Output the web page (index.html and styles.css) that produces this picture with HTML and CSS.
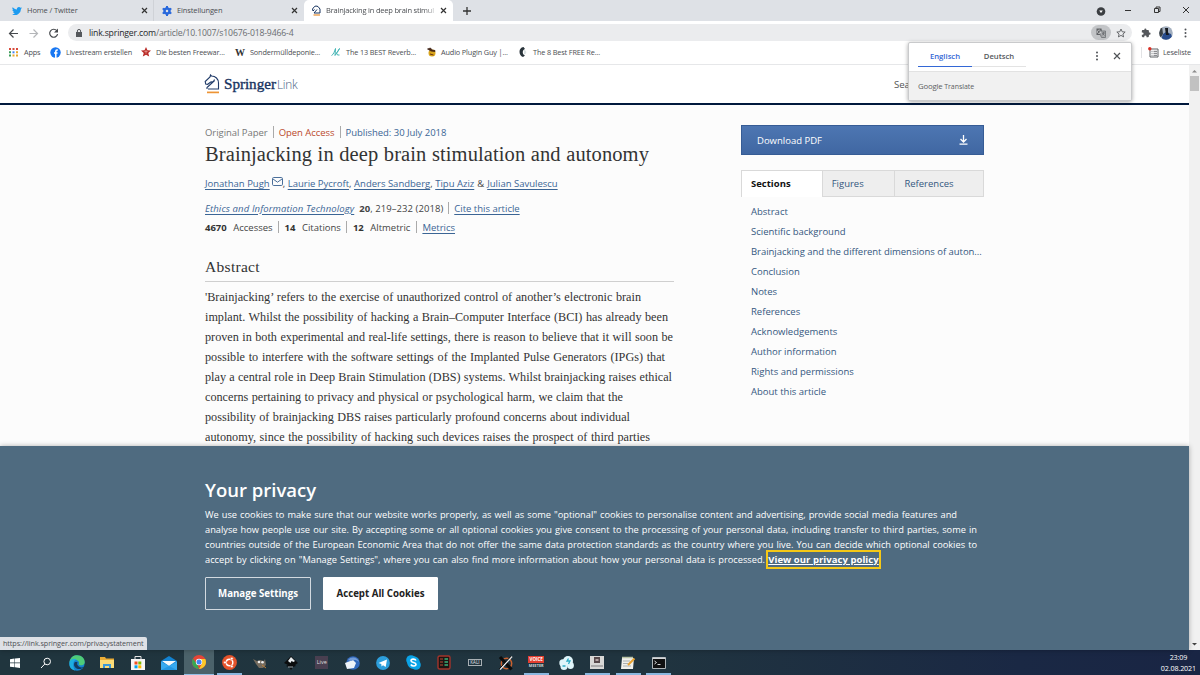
FILE: index.html
```html
<!DOCTYPE html>
<html lang="de">
<head>
<meta charset="utf-8">
<title>Brainjacking in deep brain stimulation and autonomy</title>
<link rel="stylesheet" href="styles.css">
</head>
<body>
<div class="screen">
  <header class="tabs">
    <div class="tab tab-a">
      <svg class="ic" width="10" height="10" viewBox="0 0 24 24"><path fill="#1d9bf0" d="M24 4.6c-.9.4-1.800.7-2.800.8 1-.6 1.800-1.600 2.200-2.700-1 .6-2 1-3.100 1.200a4.900 4.900 0 0 0-8.400 4.500C7.700 8.200 4.100 6.300 1.700 3.200a4.900 4.900 0 0 0 1.500 6.500c-.8 0-1.600-.2-2.200-.6v.1c0 2.400 1.700 4.400 3.900 4.800-.7.200-1.500.2-2.200.1.600 2 2.400 3.400 4.600 3.400A9.900 9.900 0 0 1 0 19.500a14 14 0 0 0 21.500-12.400c1-.7 1.800-1.500 2.500-2.500z"/></svg>
      <span class="w50">Home / Twitter</span>
      <svg class="x" width="7" height="7" viewBox="0 0 7 7"><path d="M1 1l5 5M6 1l-5 5" stroke="#333" stroke-width="1.2"/></svg>
    </div>
    <div class="tab tab-b">
      <svg class="ic" width="10" height="10" viewBox="0 0 20 20"><circle cx="10" cy="10" r="5" fill="none" stroke="#2868dc" stroke-width="5"/><path d="M10 0v4M10 16v4M1.300 5l3.500 2M15.200 13l3.500 2M1.300 15l3.500-2M15.200 7l3.500-2" stroke="#2868dc" stroke-width="4"/></svg>
      <span class="w45">Einstellungen</span>
      <svg class="x" width="7" height="7" viewBox="0 0 7 7"><path d="M1 1l5 5M6 1l-5 5" stroke="#333" stroke-width="1.200"/></svg>
    </div>
    <div class="tab tab-c">
      <svg class="ic" width="9" height="11" viewBox="0 0 18 22"><path d="M1 8L5 3l3-1 4 1 4 5v8H4l6-7M5 9l-3 3-1-4" fill="none" stroke="#16335f" stroke-width="2"/><path d="M3 20h13" stroke="#e89438" stroke-width="2.500"/></svg>
      <span class="fade">Brainjacking in deep brain stimul</span>
      <svg class="x" width="7" height="7" viewBox="0 0 7 7"><path d="M1 1l5 5M6 1l-5 5" stroke="#333" stroke-width="1.200"/></svg>
    </div>
    <svg class="plus" width="8" height="8" viewBox="0 0 8 8"><path d="M4 0v8M0 4h8" stroke="#333" stroke-width="1.300"/></svg>
    <svg class="winctl" width="100" height="20" viewBox="0 0 100 20"><circle cx="5" cy="10.500" r="4.300" fill="#3b3e42"/><path d="M3.200 9.500h3.600L5 12z" fill="#fff"/><path d="M29 9.500h6M87 6l6 6M93 6l-6 6" stroke="#333" fill="none"/><path d="M58.500 7.500h4v4h-4zM60 7V6h4v4.500h-1.500" fill="none" stroke="#333"/></svg>
  </header>

  <div class="toolbar">
    <svg class="nav" width="66" height="22" viewBox="0 0 66 22"><g fill="none" stroke="#46494d" stroke-width="1.200"><path d="M18 11.500h-8M13.500 7.500l-4 4 4 4"/><path stroke="#b4b6b9" d="M29.500 11.500h8M33.500 7.500l4 4-4 4"/><path d="M56.800 8.700a4 4 0 1 0 .8 3.500"/></g><path d="M58 6.500v4h-4z" fill="#46494d"/></svg>
    <div class="omnibox">
      <svg width="6" height="8" viewBox="0 0 6 8"><path d="M0 3h6v5H0z" fill="#55585c"/><path d="M1.400 3V2a1.600 1.600 0 0 1 3.200 0v1" fill="none" stroke="#55585c"/></svg>
      <span class="url"><b>link.springer.com</b>/article/10.1007/s10676-018-9466-4</span>
      <span class="trans"><svg width="10" height="10" viewBox="0 0 10 10"><path d="M.5.500h5l1 6.500h-6z" fill="#5e6165"/><path d="M4 3h5.500v6.500H5.500L4.500 7" fill="#a9abae" stroke="#6b6e72" stroke-width=".8"/><path d="M4.500 3a1.700 1.700 0 1 0 .2 1.200H3" stroke="#eee" stroke-width=".6" fill="none"/><path d="M6 5h3M7.500 4.200V5c0 1-.8 2-1.300 2.400M6.500 5.500l2 2" stroke="#55585c" stroke-width=".6" fill="none"/></svg></span>
      <svg class="star" width="10" height="10" viewBox="0 0 24 24"><path d="M12 2.500l2.900 6.600 7.100.6-5.400 4.700 1.600 7-6.200-3.700-6.200 3.700 1.600-7L2 9.700l7.100-.6z" fill="none" stroke="#505357" stroke-width="2"/></svg>
    </div>
    <svg class="ext" width="10" height="10" viewBox="0 0 24 24"><path fill="#55585c" d="M20.500 11H19V7a2 2 0 0 0-2-2h-4V3.500a2.500 2.500 0 0 0-5 0V5H4a2 2 0 0 0-2 2v3.800h1.500a2.700 2.700 0 0 1 0 5.400H2V20c0 1.100.9 2 2 2h3.800v-1.500a2.700 2.700 0 0 1 5.400 0V22H17a2 2 0 0 0 2-2v-4h1.500a2.500 2.500 0 0 0 0-5z"/></svg>
    <svg class="avatar" width="14" height="14" viewBox="0 0 14 14"><defs><clipPath id="av"><circle cx="7" cy="7" r="6.800"/></clipPath></defs><g clip-path="url(#av)"><path fill="#a3afbf" d="M0 0h14v14H0z"/><path fill="#3a4045" d="M0 0h3l1 8-4 6z"/><path fill="#274b8b" d="M2 14l2-6 3-2 5 2 2 6z"/><path fill="#15191f" d="M6 2h3v4l1 3H7z"/></g></svg>
    <svg class="dots" width="3" height="10" viewBox="0 0 3 10"><g fill="#505357"><circle cx="1.500" cy="1.400" r="1"/><circle cx="1.500" cy="5" r="1"/><circle cx="1.500" cy="8.600" r="1"/></g></svg>
  </div>

  <nav class="bookmarks">
    <a class="bm b1"><svg width="10" height="10" viewBox="0 0 10 10"><g fill="#d84a3b"><path d="M0 1h2v2H0zM3.500 1h2v2h-2zM7 1h2v2H7z"/><path fill="#3b9d58" d="M0 4.300h2v2H0z"/><path fill="#4285f4" d="M3.500 4.300h2v2h-2z"/><path fill="#e8a72b" d="M7 4.300h2v2H7zM3.500 7.600h2v2h-2zM7 7.600h2v2H7z"/><path fill="#3b9d58" d="M0 7.600h2v2H0z"/></g></svg><span>Apps</span></a>
    <a class="bm b2"><svg width="11" height="11" viewBox="0 0 11 11"><circle cx="5.500" cy="5.500" r="5.200" fill="#1877f2"/><path d="M7.800 3H7c-1 0-1.200.5-1.200 1.200V11M4 6h3.500" fill="none" stroke="#fff" stroke-width="1.500"/></svg><span>Livestream erstellen</span></a>
    <a class="bm b3"><svg width="10" height="10" viewBox="0 0 24 24"><path d="M12 0l3.500 8 8.500.6-6.500 5.700 2.200 8.700L12 18.500 4.300 23l2.200-8.700L0 8.600 8.500 8z" fill="#b92b27"/><path d="M12 7v9M8 11h8" stroke="#efb0a8" stroke-width="1.500"/></svg><span>Die besten Freewar...</span></a>
    <a class="bm b4"><i class="wiki">W</i><span>Sondermülldeponie...</span></a>
    <a class="bm b5"><svg width="10" height="10" viewBox="0 0 20 20"><path d="M1 17c4-1 7-11 8-14l-1 14L17 3c-2 5-5 8-6 9l2 4 4 0" fill="none" stroke="#43b5b5" stroke-width="2"/></svg><span>The 13 BEST Reverb...</span></a>
    <a class="bm b6"><svg width="9" height="10" viewBox="0 0 18 20"><ellipse cx="10" cy="12" rx="7" ry="7" fill="#d9a51c"/><path d="M1 4l6-2 3 4 6 1v2L8 8z" fill="#4b2614" stroke="#3b2015" stroke-width="1.500"/><path d="M6 14l7 2" stroke="#6b3515" stroke-width="2"/></svg><span>Audio Plugin Guy |...</span></a>
    <a class="bm b7"><svg width="9" height="10" viewBox="0 0 18 20"><path d="M9 0C-2 1-1 18 8 20l4-3C6 15 6 6 12 4z" fill="#29333a"/><path d="M10 6c6 0 6 9 0 9" fill="#dce3e4"/></svg><span>The 8 Best FREE Re...</span></a>
    <a class="reading"><svg width="11" height="11" viewBox="0 0 11 11"><path d="M2 2h8v8H2z" fill="none" stroke="#5d6064"/><path d="M3.500 4.300h1M5.500 4.300h3.500M3.500 6.300h1M5.500 6.300h3.500M3.500 8.300h1M5.500 8.300h3.500" stroke="#5d6064" stroke-width=".9"/><circle cx="1.800" cy="1.800" r="1.700" fill="#d93025"/></svg><span>Leseliste</span></a>
  </nav>

  <div class="view">
    <div class="page">
      <div class="site-head">
        <svg width="17" height="20" viewBox="0 0 17 20"><g fill="none" stroke="#1f3a68" stroke-width="1.100"><path d="M4 15h10.500V9c0-4-3-7-7-7L6.500 1 6 3 1.200 7.500l.5 2.500 2 .3 3-2.300 2.800-.5L3 13.500V15M9.500 7.500l1-2"/></g><path d="M3 18.400h12" stroke="#ed9435" stroke-width="1.700"/></svg>
        <span class="brand">Springer</span><span class="brand2">Link</span>
        <span class="search">Sea</span>
      </div>
      <div class="cols">
        <main>
          <div class="meta"><span class="gray m1">Original Paper</span><i></i><span class="red m2">Open Access</span><i></i><span class="blue m3">Published: 30 July 2018</span></div>
          <h1>Brainjacking in deep brain stimulation and autonomy</h1>
          <div class="authors"><a class="a1">Jonathan Pugh</a><svg width="11" height="9" viewBox="0 0 11 9"><rect x=".5" y=".5" width="10" height="8" rx="1.200" fill="none" stroke="#4b6f9a"/><path d="M1 2l4.500 3.200L10 2" fill="none" stroke="#4b6f9a"/></svg><span class="comma">,</span><a class="a2">Laurie Pycroft</a><span class="comma">,</span><a class="a3">Anders Sandberg</a><span class="comma">,</span><a class="a4">Tipu Aziz</a><span class="amp">&amp;</span><a class="a5">Julian Savulescu</a></div>
          <div class="journal"><a class="j1">Ethics and Information Technology</a><span class="j2"><b>20</b>, 219–232 (2018)</span><i></i><a class="j3">Cite this article</a></div>
          <div class="stats"><b>4670</b><span class="s1">Accesses</span><i></i><b>14</b><span class="s2">Citations</span><i></i><b>12</b><span class="s3">Altmetric</span><i></i><a>Metrics</a></div>
          <h2>Abstract</h2>
          <div class="abstract">
            <div class="l1">'Brainjacking’ refers to the exercise of unauthorized control of another’s electronic brain</div>
            <div class="l2">implant. Whilst the possibility of hacking a Brain–Computer Interface (BCI) has already been</div>
            <div class="l3">proven in both experimental and real-life settings, there is reason to believe that it will soon be</div>
            <div class="l4">possible to interfere with the software settings of the Implanted Pulse Generators (IPGs) that</div>
            <div class="l5">play a central role in Deep Brain Stimulation (DBS) systems. Whilst brainjacking raises ethical</div>
            <div class="l6">concerns pertaining to privacy and physical or psychological harm, we claim that the</div>
            <div class="l7">possibility of brainjacking DBS raises particularly profound concerns about individual</div>
            <div class="l8">autonomy, since the possibility of hacking such devices raises the prospect of third parties</div>
          </div>
        </main>
        <aside>
          <div class="pdf"><span>Download PDF</span><svg width="9" height="10" viewBox="0 0 9 10"><path d="M4.500 0v6.500M1.500 4l3 3 3-3M.5 9.200h8" fill="none" stroke="#fff" stroke-width="1.300"/></svg></div>
          <div class="stabs"><b>Sections</b><span>Figures</span><span>References</span></div>
          <ul>
            <li>Abstract</li><li>Scientific background</li><li class="long">Brainjacking and the different dimensions of auton...</li><li>Conclusion</li><li>Notes</li><li>References</li><li>Acknowledgements</li><li>Author information</li><li>Rights and permissions</li><li>About this article</li>
          </ul>
        </aside>
      </div>
      <section class="privacy">
        <h3>Your privacy</h3>
        <div class="p1">We use cookies to make sure that our website works properly, as well as some "optional" cookies to personalise content and advertising, provide social media features and</div>
        <div class="p2">analyse how people use our site. By accepting some or all optional cookies you give consent to the processing of your personal data, including transfer to third parties, some in</div>
        <div class="p3">countries outside of the European Economic Area that do not offer the same data protection standards as the country where you live. You can decide which optional cookies to</div>
        <div class="p4"><span>accept by clicking on "Manage Settings", where you can also find more information about how your personal data is processed.</span><a>View our privacy policy</a></div>
        <div class="btns"><button class="manage">Manage Settings</button><button class="accept">Accept All Cookies</button></div>
      </section>
    </div>
    <div class="scroll"><svg width="11" height="11" viewBox="0 0 11 11"><path d="M3 7.500h5L5.500 5z" fill="#8a8a8a"/></svg><div class="thumb"></div><svg class="down" width="11" height="11" viewBox="0 0 11 11"><path d="M3 4h5L5.500 6.500z" fill="#444"/></svg></div>
    <div class="popup">
      <div class="ptop"><b class="en">Englisch</b><b class="de">Deutsch</b><svg width="32" height="12" viewBox="0 0 32 12"><g fill="#505357"><circle cx="5" cy="2.500" r="1"/><circle cx="5" cy="6" r="1"/><circle cx="5" cy="9.500" r="1"/></g><path d="M22 3l6 6M28 3l-6 6" stroke="#505357" stroke-width="1.200"/></svg></div>
      <div class="pbot"><span>Google</span> Translate</div>
    </div>
    <div class="status">https://link.springer.com/privacystatement</div>
  </div>

  <footer class="taskbar">
    <div><svg width="12" height="12" viewBox="0 0 12 12"><path fill="#fff" d="M1 2.200l4.500-.6v4H1zM6 1.500L11 1v4.600H6zM1 6.200h4.500v4L1 9.700zM6 6.200h5V11l-5-.7z"/></svg></div>
    <div><svg width="12" height="12" viewBox="0 0 12 12"><circle cx="7.200" cy="4.500" r="3.300" fill="none" stroke="#fff"/><path d="M4.800 7L1 11" stroke="#fff"/></svg></div>
    <div><svg width="16" height="16" viewBox="0 0 16 16"><circle cx="8" cy="8" r="7.700" fill="#1483cf"/><path d="M.4 8C1 2 5 .3 8 .3c5 0 8 3.500 7.700 7.200-.3 3-5 3.500-6 2C11 7 9 5 6 5S1 6 .4 8z" fill="#4fcb78"/><path d="M6 7c-2 2-1 6 3 7 3 .5 5-1 5.500-2-2 1-5 0-6-2-.6-1-.3-2 0-3z" fill="#143d60"/><path d="M.4 8C1 4 5 3 8 4.500 4 5 3 10 6 15.500 2 14.500 0 12 .4 8z" fill="#1daee0"/></svg></div>
    <div><svg width="14" height="13" viewBox="0 0 14 13"><path d="M0 1h5l1 1.500h8V12H0z" fill="#e9ac36"/><path d="M0 4h14v8H0z" fill="#fbdc78"/><path d="M3 8h8v4H9V10H5v2H3z" fill="#3b99d9"/></svg></div>
    <div><svg width="14" height="16" viewBox="0 0 14 16"><path d="M4 5V1.500h6V5" fill="none" stroke="#e5e5e5"/><path d="M0 4h14v11H0z" fill="#f6f6f6"/><path d="M3.500 6.500h3v3h-3z" fill="#f25022"/><path d="M7.300 6.500h3v3h-3z" fill="#7fba00"/><path d="M3.500 10.300h3v3h-3z" fill="#00a4ef"/><path d="M7.300 10.300h3v3h-3z" fill="#ffb900"/></svg></div>
    <div><svg width="16" height="14" viewBox="0 0 16 14"><path d="M0 5l8-5 8 5v9H0z" fill="#1282d1"/><path d="M1 5h14l-7 5z" fill="#f5f9fc"/><path d="M0 5.500l8 4.500 8-4.500V14H0z" fill="#38aaf0"/><path d="M0 14l8-4 8 4z" fill="#2497e3"/></svg></div>
    <div class="active"><svg width="14" height="14" viewBox="0 0 14 14"><circle cx="7" cy="7" r="7" fill="#e54537"/><path d="M1 3.500L5.500 10 7 14A7 7 0 0 1 1 3.500z" fill="#36a852"/><path d="M7 4h6.300A7 7 0 0 1 7 14l3-5.500z" fill="#fbc928"/><circle cx="7" cy="7" r="3.200" fill="#fff"/><circle cx="7" cy="7" r="2.500" fill="#4285f4"/></svg></div>
    <div class="open"><svg width="15" height="15" viewBox="0 0 15 15"><circle cx="7.500" cy="7.500" r="7.400" fill="#e4532b"/><circle cx="7.500" cy="7.500" r="3.300" fill="none" stroke="#fff" stroke-width="1.400"/><g fill="#fff" stroke="#e4532b" stroke-width=".6"><circle cx="3" cy="7.500" r="1.400"/><circle cx="9.800" cy="3.600" r="1.400"/><circle cx="9.800" cy="11.400" r="1.400"/></g></svg></div>
    <div><svg width="14" height="12" viewBox="0 0 14 12"><path d="M0 2l4 2 3-1 4 1 1-2 1 6-3 3H6L3 7z" fill="#756b5d"/><circle cx="6" cy="5" r="1.300" fill="#eee"/><circle cx="9.500" cy="5.200" r="1.300" fill="#eee"/><path d="M9 8l4 3" stroke="#c08138"/></svg></div>
    <div><svg width="14" height="14" viewBox="0 0 14 14"><path d="M7 0l7 7-3 2 1 1-3 1-2 3-2-3-3-1 2-1-4-2z" fill="#0b0d0e"/><path d="M7 1l4 4-1.500 1-2-1-1 2-2.500-2z" fill="#e9eef0"/><path d="M4 11h5" stroke="#9aa5aa"/></svg></div>
    <div><span class="live">Live</span></div>
    <div><svg width="15" height="14" viewBox="0 0 15 14"><circle cx="8" cy="7" r="6.800" fill="#3168bb"/><path d="M0 7l8-3 3 3-2 5-7 1z" fill="#eef3f8"/><path d="M3 4c3-4 10-3 11 2-3-3-6-2-8-1z" fill="#729cd8"/></svg></div>
    <div><svg width="14" height="14" viewBox="0 0 14 14"><circle cx="7" cy="7" r="6.900" fill="#2c9edb"/><path d="M2.500 7L11 3.500 9.700 11 7 9.200 5.500 10.500 5.300 8z" fill="#fff"/></svg></div>
    <div><svg width="15" height="15" viewBox="0 0 15 15"><circle cx="5" cy="5" r="4.800" fill="#0aa3e6"/><circle cx="10" cy="10" r="4.800" fill="#0aa3e6"/><circle cx="7.500" cy="7.500" r="6.300" fill="#0aa3e6"/><path d="M10 5.500C9 3.500 5 3.700 5 5.800 5 8 10 7 10 9.300c0 2.200-4 2.200-5.200.2" fill="none" stroke="#fff" stroke-width="1.600"/></svg></div>
    <div><svg width="14" height="15" viewBox="0 0 14 15"><rect x="1" y="1" width="12" height="13" rx="1.500" fill="#1d1412" stroke="#a3342b" stroke-width="1.400"/><path d="M3 4h3M3 7h3M3 10h3" stroke="#ba4a34"/><path d="M7.500 4h3.500M7.500 7h3.500M7.500 10h3.500" stroke="#3bb17a" stroke-width="1.300"/></svg></div>
    <div><span class="kali">KALI</span></div>
    <div><svg width="16" height="16" viewBox="0 0 16 16"><circle cx="8.500" cy="8.500" r="5.200" fill="none" stroke="#c8602e" stroke-width="1.500"/><path d="M2 2l11.500 12.500" stroke="#0c0c0c" stroke-width="3.200"/><path d="M14 1.500L2 14.500" stroke="#e9e9e9" stroke-width="1.500"/><path d="M13 1.200L1.200 14" stroke="#111" stroke-width="1"/></svg></div>
    <div class="open"><span class="voice"><b>VOICE</b><b>MEETER</b></span></div>
    <div><svg width="15" height="14" viewBox="0 0 15 14"><g fill="#e0f5fa"><circle cx="9" cy="5" r="5"/><circle cx="4" cy="7" r="3.700"/><circle cx="5" cy="10.500" r="3.500"/><circle cx="11.500" cy="9.500" r="3.400"/></g><path d="M9.500 2.500L8 5h3L9.500 8M3.500 10h3" fill="none" stroke="#2baac4" stroke-width="1.300"/></svg></div>
    <div class="open"><svg width="14" height="14" viewBox="0 0 14 14"><path d="M0 0h14v13H0z" fill="#d8d8d6"/><path d="M4 1h6v6H4z" fill="#57494b"/><path d="M5.500 3h3v2h-3z" fill="#b5a5a5"/><path d="M1 9h12v2H1z" fill="#aaa"/></svg></div>
    <div class="open"><svg width="15" height="14" viewBox="0 0 15 14"><path d="M1 2h12l-1 11H0z" fill="#f1f0eb"/><path d="M1 1.500h11" stroke="#b9c3a4" stroke-width="1.500"/><path d="M2 5h7M2 7.500h5M2 10h8" stroke="#9aa1a5" stroke-width=".8"/><path d="M13.500 2.500L7 9" stroke="#e7a02f" stroke-width="2"/></svg></div>
    <div class="open"><svg width="14" height="12" viewBox="0 0 14 12"><path d="M.5.500h13v11H.5z" fill="#111" stroke="#aeb4b7"/><path d="M.5 1.300h13" stroke="#d5d7d9" stroke-width="1.400"/><path d="M2.500 4l2 1.500-2 1.500M5.500 7.500h3" fill="none" stroke="#eee" stroke-width=".9"/></svg></div>
    <div class="clock"><span>23:09</span><span>02.08.2021</span></div>
  </footer>
</div>
</body>
</html>
```
FILE: styles.css
```css
* { box-sizing: border-box; }
body { margin: 0; font-family: "Open Sans", "Noto Sans", sans-serif; }
svg { display: block; flex: none; }
.screen { width: 1200px; height: 675px; display: flex; flex-direction: column; overflow: hidden; background: #fff; white-space: nowrap; }

/* tab strip */
.tabs { height: 21px; flex: none; background: #dee1e6; display: flex; align-items: center; font-size: 7.500px; letter-spacing: -.12px; color: #4b4e52; padding-bottom: 0; }
.tab { height: 21px; display: flex; align-items: center; padding-right: 7px; }
.tab > span { padding-bottom: 1px; }
.tab .ic { margin-right: 5px; }
.tab .x { margin-left: auto; }
.tab-a { width: 154px; padding-left: 12px; padding-right: 5px; border-right: 1px solid #cfd2d7; }
.tab-b { width: 150px; padding-left: 8px; padding-right: 6px; }
.tab-c { width: 149px; padding-left: 8px; background: #fff; border-radius: 5px 5px 0 0; padding-right: 6px; }
.fade { width: 109px; overflow: hidden; letter-spacing: -.2px; -webkit-mask-image: linear-gradient(90deg, #000 90%, rgba(0,0,0,.25)); mask-image: linear-gradient(90deg, #000 90%, rgba(0,0,0,.25)); }
.plus { margin-left: 10px; }
.winctl { margin-left: auto; margin-right: 4px; }

/* toolbar */
.toolbar { height: 23px; flex: none; display: flex; align-items: center; }
.nav { margin-right: 2px; }
.omnibox { width: 1064px; height: 17px; border-radius: 9px; background: #ebecee; display: flex; align-items: center; padding-left: 8px; font-size: 8.700px; color: #6a6d71; }
.url { margin-left: 7px; letter-spacing: -.18px; }
.url b { font-weight: 400; color: #25282b; }
.trans { margin-left: auto; width: 20px; height: 15px; border-radius: 8px; background: #c2c4c7; display: grid; place-items: center; }
.star { margin: 0 6px 0 5px; }
.ext { margin-left: 9px; }
.avatar { margin-left: 8px; }
.dots { margin-left: 11px; }

/* bookmarks */
.bookmarks { height: 21px; flex: none; border-bottom: 1px solid #e6e7e9; display: flex; align-items: center; padding: 0 9px 4px 9px; font-size: 7.300px; color: #4b4e52; }
.bm, .reading { display: flex; align-items: center; gap: 5px; letter-spacing: -.14px; }
.b1 { width: 41px; } .b2 { width: 91px; } .b3 { width: 94px; } .b4 { width: 96px; } .b5 { width: 96px; } .b6 { width: 92px; }
.b6, .b7 { gap: 5px; }
.b4 { gap: 4px; }
.wiki { font: 700 10px "Liberation Serif", serif; color: #333; width: 11px; letter-spacing: 0; }
.reading { margin-left: auto; border-left: 1px solid #e2e3e5; padding-left: 6px; gap: 4px; height: 11px; }

/* viewport */
.view { position: relative; height: 585px; flex: none; display: flex; }
.page { width: 1189px; background: #fcfcfc; display: flex; flex-direction: column; }
.site-head { height: 40px; flex: none; border-bottom: 2px solid #01193d; background: #fff; display: flex; align-items: center; padding-left: 204px; }
.brand { width: 52px; font: 15.200px "Liberation Serif", serif; color: #17325f; margin-left: 3px; -webkit-text-stroke: .35px #17325f; letter-spacing: -.05px; }
.brand2 { width: 22px; font-size: 11.800px; font-weight: 300; color: #4a5f82; margin-left: 1px; letter-spacing: -.2px; }
.search { margin-left: 595px; width: 14px; overflow: hidden; font-size: 9.600px; letter-spacing: -.1px; color: #555; }

.cols { flex: 1; display: flex; padding-left: 205px; min-height: 0; }
main { width: 469px; padding-top: 19px; font-size: 9.500px; color: #444; }
main a, .blue { color: #3b6595; }
main a { text-decoration: underline; text-underline-offset: 1.500px; text-decoration-thickness: 1px; }
main i { width: 1px; height: 12px; background: #aaa; margin: 0 5px; }
.meta, .authors, .journal, .stats { display: flex; align-items: center; height: 16px; }
.meta { letter-spacing: -.04px; }
.gray { color: #777; } .red { color: #bb4a2c; }
h1 { margin: 0; font: 20.500px/28px "Liberation Serif", serif; color: #333; width: 444px; letter-spacing: .1px; text-align-last: justify; }
.authors { margin-top: 8px; height: 15px; }
.authors svg { margin: -4px 0 0 2px; }
.comma { width: 5px; }
.amp { margin: 0 3px; }
.journal { margin-top: 9px; height: 16px; }
.j1 { font-style: italic; margin-right: 5px; letter-spacing: .12px; }
.j2 { letter-spacing: .06px; }
.stats { margin-top: 3px; }
.stats i { margin: 0 5.500px; }
.stats b { margin-right: 6.500px; color: #333; }
h2 { margin: 20px 0 0; height: 27px; border-bottom: 1px solid #cfcfcf; font: 15.500px/24px "Liberation Serif", serif; color: #333; letter-spacing: .3px; }
.abstract { font: 12.200px/20px "Liberation Serif", serif; color: #333; padding-top: 5px; }
.abstract div, .p1, .p2, .p3, .p4 span { text-align-last: justify; }
.l1 { width: 436px; } .l2 { width: 463px; } .l3 { width: 468px; } .l4 { width: 460px; }
.l5 { width: 467px; } .l6 { width: 418px; } .l7 { width: 425px; } .l8 { width: 445px; }

aside { margin-left: 67px; width: 243px; padding-top: 20px; color: #35587f; font-size: 9.500px; }
.pdf { height: 30px; border: 1px solid #365c95; background: linear-gradient(#4d76b2, #4067a2); color: #fff; display: flex; align-items: center; justify-content: space-between; padding: 0 15px; }
.stabs { margin-top: 15px; height: 27px; display: flex; border: 1px solid #d9d9d9; border-bottom: 0; }
.stabs b, .stabs span { display: flex; align-items: center; padding: 0 0 1px 9px; }
.stabs b { width: 80px; background: #fff; color: #111; }
.stabs span { width: 73px; background: #eee; border-left: 1px solid #d9d9d9; border-bottom: 1px solid #d9d9d9; }
.stabs span:last-child { width: 89px; }
ul { list-style: none; margin: 5px 0 0; padding: 0 0 0 10px; line-height: 20px; }
.long { letter-spacing: -.03px; }

/* cookie banner */
.privacy { height: 204px; flex: none; background: #4f6b80; color: #fff; padding: 30px 0 0 205px; box-shadow: 0 0 5px rgba(0,0,0,.3); font-size: 9.250px; line-height: 15px; position: relative; }
h3 { margin: 0; font-size: 18.500px; line-height: 28px; height: 31px; font-weight: 600; }
.p1 { width: 752px; } .p2, .p3 { width: 772px; }
.p4 { display: flex; }
.p4 span { width: 560px; }
.p4 a { margin: -2px 0 -2px 1px; width: 115px; height: 19px; border: 2px solid #f5c816; line-height: 15px; font-size: 9.500px; letter-spacing: .05px; font-weight: 700; text-decoration: underline; text-align: center; }
.btns { display: flex; gap: 12px; margin-top: 10px; }
button { height: 33px; font: 700 9.700px "Open Sans", sans-serif; border: 1px solid #d3dae0; border-radius: 1px; padding: 0; white-space: nowrap; }
.manage { width: 106px; background: none; color: #fff; }
.accept { width: 115px; background: #fff; color: #222; border-color: #fff; }

.scroll { width: 11px; background: #f1f1f1; display: flex; flex-direction: column; }
.thumb { width: 9px; height: 15px; background: #c1c1c1; margin-left: 1px; }
.down { margin-top: auto; }

/* overlays */
.popup { position: absolute; left: 908px; top: -23px; width: 224px; height: 59px; background: #fff; border: 1px solid #c9cacc; border-radius: 2px; box-shadow: 0 1px 4px rgba(0,0,0,.35); font-size: 7.700px; overflow: hidden; }
.ptop { height: 29px; display: flex; align-items: center; padding-left: 9px; border-bottom: 1px solid #e2e2e2; }
.ptop b { height: 17px; width: 54px; text-align: center; line-height: 12px; font-weight: 600; color: #55585c; border-bottom: 1px solid #e3e3e3; margin-top: 2px; }
.ptop .en { color: #3367d6; border-bottom-color: #3367d6; }
.ptop svg { margin-left: 66px; margin-bottom: 2px; }
.pbot { height: 30px; background: #f1f1f1; padding-left: 9px; line-height: 29px; font-size: 7px; letter-spacing: -.05px; color: #5b5e62; }
.pbot span { font-size: 7.800px; letter-spacing: -.2px; }
.status { position: absolute; left: 0; bottom: 0; width: 147px; height: 13px; background: #dee1e6; border-radius: 0 2px 0 0; font-size: 7.200px; letter-spacing: -.06px; line-height: 13px; padding-left: 3px; color: #4d5054; }

/* taskbar */
.taskbar { height: 25px; flex: none; display: grid; grid-template-columns: repeat(22, 30.650px) 1fr; background: linear-gradient(90deg, #20353e 0, #20343f 55%, #1a2844 85%, #192544); }
.taskbar > div { display: grid; place-items: center; }
.taskbar .active { background: #4b626a; border-bottom: 1px solid #93bfe5; }
.taskbar .open { background: linear-gradient(#8ab7df, #8ab7df) center bottom / 25px 2px no-repeat; }
.live { width: 13px; height: 13px; background: #493f50; color: #ddd; font-size: 5.500px; line-height: 13px; text-align: center; }
.kali { width: 14px; height: 7px; border: 1px solid #a9b0b4; color: #e3e6e8; font-size: 4.500px; line-height: 5px; text-align: center; }
.voice { width: 16px; display: grid; font-size: 4.500px; line-height: 7px; color: #fff; text-align: center; }
.voice b:first-child { background: #e33e30; }
.voice b:last-child { font-size: 3.800px; line-height: 6px; color: #d3d6d8; }
.taskbar .clock { justify-self: end; align-content: center; font-size: 7.200px; line-height: 11px; color: #fff; padding-right: 4px; letter-spacing: -.15px; }
```
